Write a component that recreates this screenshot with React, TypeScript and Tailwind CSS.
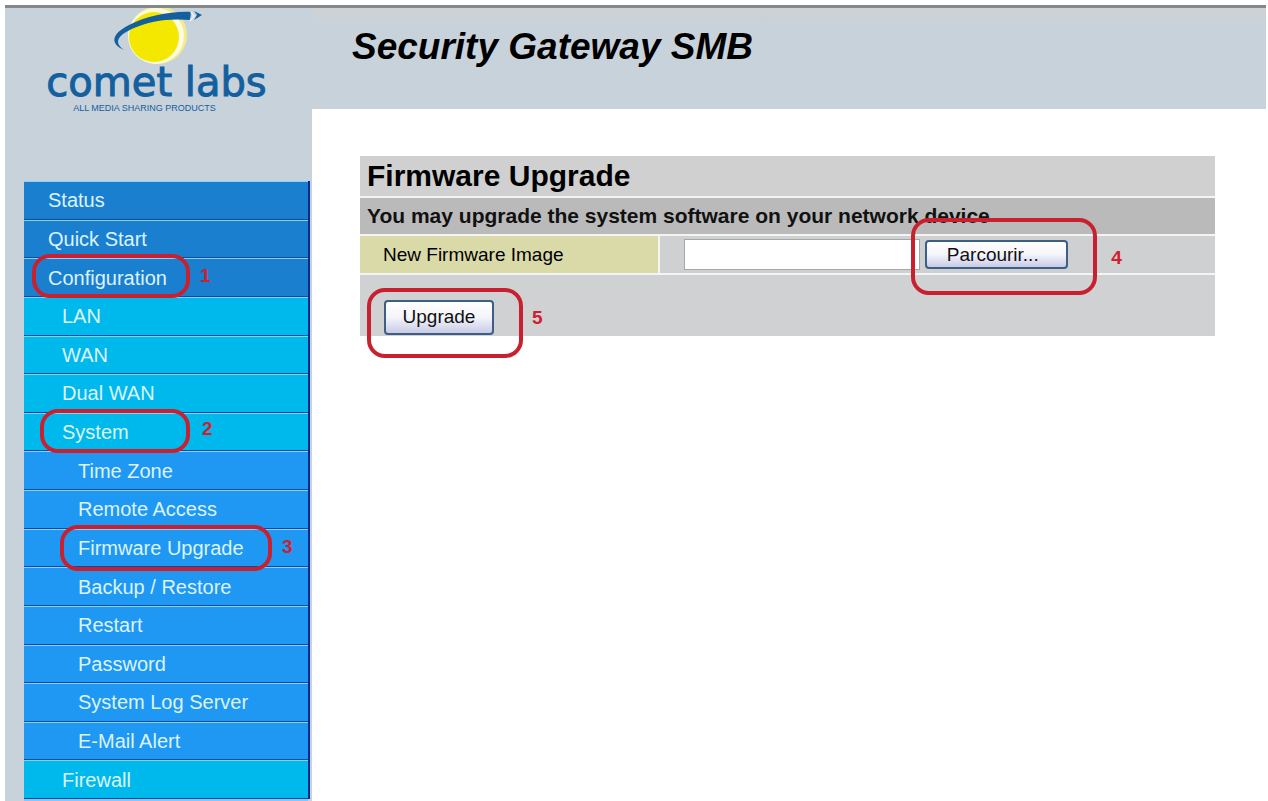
import { useState } from 'react';
import clsx from 'clsx';

type MenuItem = {
  label: string;
  level: 1 | 2 | 3;
  mark?: { step: string; box: string; number: string };
};

const menu: MenuItem[] = [
  { label: 'Status', level: 1 },
  { label: 'Quick Start', level: 1 },
  {
    label: 'Configuration',
    level: 1,
    mark: { step: '1', box: 'left-2 w-[158px] -top-1 h-11', number: 'left-[176px] top-1.5' },
  },
  { label: 'LAN', level: 2 },
  { label: 'WAN', level: 2 },
  { label: 'Dual WAN', level: 2 },
  {
    label: 'System',
    level: 2,
    mark: { step: '2', box: 'left-4 w-[150px] -top-1 h-11', number: 'left-[178px] top-1' },
  },
  { label: 'Time Zone', level: 3 },
  { label: 'Remote Access', level: 3 },
  {
    label: 'Firmware Upgrade',
    level: 3,
    mark: { step: '3', box: 'left-9 w-[212px] -top-1 h-[46px]', number: 'left-[258px] top-1.5' },
  },
  { label: 'Backup / Restore', level: 3 },
  { label: 'Restart', level: 3 },
  { label: 'Password', level: 3 },
  { label: 'System Log Server', level: 3 },
  { label: 'E-Mail Alert', level: 3 },
  { label: 'Firewall', level: 2 },
];

const levelStyles = {
  1: 'bg-[#1b7fd0] pl-6',
  2: 'bg-[#00b9ec] pl-[38px]',
  3: 'bg-[#1f98f4] pl-[54px]',
};

function Logo() {
  return (
    <div className="flex flex-col items-center pr-1 text-[#14609f]">
      <svg width="100" height="57" viewBox="0 0 100 57" aria-hidden="true">
        <circle cx="51" cy="27" r="29" fill="#f3ec8c" />
        <circle cx="49" cy="28" r="28" fill="#fdfbe0" />
        <circle cx="47" cy="29" r="25" fill="#f4e800" />
        <path
          d="M17 42 C3 36 4 26 22 17 C40 8 64 3 84 4 L83 12 C62 10 42 13 27 20 C11 27 6 34 17 42 Z"
          fill="#14609f"
        />
        <path d="M84 4 L87 8 L83 13" fill="none" stroke="#e9eef0" strokeWidth="2" />
        <path d="M87 3 L95 7 L87 12 L90 7 Z" fill="#14609f" />
      </svg>
      <div className="font-['DejaVu_Sans',sans-serif] text-[40px] leading-[34px] whitespace-nowrap [-webkit-text-stroke:1px_#14609f]">
        comet labs
      </div>
      <div className="mt-1 mr-6 text-[9px] leading-[10px] whitespace-nowrap">ALL MEDIA SHARING PRODUCTS</div>
    </div>
  );
}

function Marker({ step, box, number }: { step: string; box: string; number: string }) {
  return (
    <>
      <span className={clsx('pointer-events-none absolute z-10 rounded-[18px] border-4 border-[#c8202f]', box)} />
      <span className={clsx('pointer-events-none absolute z-10 text-[19px] leading-6 font-bold text-[#d0202f]', number)}>
        {step}
      </span>
    </>
  );
}

const buttonStyle =
  'rounded-[4px] border-2 border-[#3c5f85] bg-linear-to-b from-white via-[#f4f4fb] to-[#c9cbe6] text-[19px] text-[#111]';

export default function App() {
  const [fileName, setFileName] = useState('');

  return (
    <div className="flex min-h-screen flex-col bg-white pt-[5px] pr-[2px] pl-[5px] font-['Liberation_Sans',Arial,sans-serif]">
      <div className="flex grow border-t-3 border-[#858789]">
        <aside className="flex w-[307px] shrink-0 flex-col bg-[#c8d2da]">
          <div className="h-[173px]">
            <Logo />
          </div>
          <nav className="mr-[2px] ml-[19px] flex h-[618px] flex-col border-r-2 border-[#0a2a8c]">
            {menu.map((item) => (
              <div key={item.label} className="relative flex flex-1">
                <a
                  href="#"
                  className={clsx(
                    'flex flex-1 items-center border-t border-b border-t-[#8cd0f8] border-b-[#0d4aa5] text-[20px] leading-6 text-[#dcf3ff]',
                    levelStyles[item.level]
                  )}
                >
                  {item.label}
                </a>
                {item.mark && <Marker {...item.mark} />}
              </div>
            ))}
          </nav>
          <div className="mr-1 ml-[19px] grow bg-[#8cc4f8]" />
        </aside>

        <div className="flex min-w-0 grow flex-col">
          <header className="h-[101px] bg-linear-to-b from-[#cfd1d3] to-[#c8d2da] to-15% pt-[17px] pl-10">
            <h1 className="text-[37px] leading-[44px] font-bold text-black italic">Security Gateway SMB</h1>
          </header>

          <main className="pt-[47px] pr-[51px] pl-12">
            <form onSubmit={(e) => e.preventDefault()}>
              <table className="w-full table-fixed border-collapse text-left text-black">
                <colgroup>
                  <col className="w-[35%]" />
                  <col />
                </colgroup>
                <tbody>
                  <tr className="h-[41px] border-b-2 border-[#f4f4f4] bg-[#d0d0d0]">
                    <th colSpan={2} className="p-0 pl-[7px]">
                      <h2 className="text-[30px] leading-9 font-bold">Firmware Upgrade</h2>
                    </th>
                  </tr>
                  <tr className="h-[38px] border-b-2 border-[#f4f4f4] bg-[#bababa]">
                    <td colSpan={2} className="p-0 pl-[7px] text-[21px] leading-6 font-bold text-[#111]">
                      You may upgrade the system software on your network device
                    </td>
                  </tr>
                  <tr className="h-[39px] border-b-2 border-[#f4f4f4] bg-[#cfd0d2]">
                    <td className="border-r-2 border-[#f4f4f4] bg-[#dadaa9] p-0 pl-[23px] text-[19px] leading-6">
                      <label htmlFor="firmware">New Firmware Image</label>
                    </td>
                    <td className="p-0 pl-6">
                      <div className="flex items-center gap-[5px]">
                        <input
                          id="firmware"
                          type="text"
                          value={fileName}
                          onChange={(e) => setFileName(e.target.value)}
                          className="h-[31px] w-[236px] border border-[#a3a9a9] bg-white px-2 text-[19px]"
                        />
                        <div className="relative">
                          <button type="button" className={clsx(buttonStyle, 'block h-[29px] w-[143px] pr-2 leading-6')}>
                            Parcourir...
                          </button>
                          <Marker step="4" box="-left-[14px] -top-[22px] h-[77px] w-[186px]" number="left-[186px] top-1.5" />
                        </div>
                      </div>
                    </td>
                  </tr>
                  <tr className="h-[62px] bg-[#cfd1d3]">
                    <td colSpan={2} className="p-0 pt-6 pl-6">
                      <div className="relative w-[110px]">
                        <button type="submit" className={clsx(buttonStyle, 'block h-[35px] w-full')}>
                          Upgrade
                        </button>
                        <Marker step="5" box="-left-[17px] -top-3 h-[70px] w-[156px]" number="left-[148px] top-1.5" />
                      </div>
                    </td>
                  </tr>
                </tbody>
              </table>
            </form>
          </main>
        </div>
      </div>
    </div>
  );
}
